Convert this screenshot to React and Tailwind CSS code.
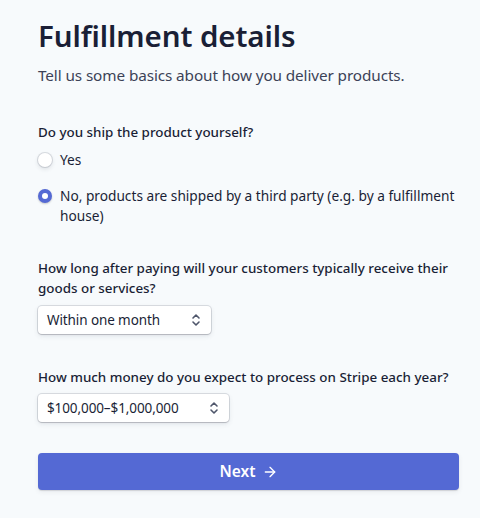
import { ArrowRight } from 'lucide-react';

const font = { fontFamily: '"Noto Sans", "Open Sans", sans-serif' };

const Chevrons = () => (
  <svg width="10" height="14" viewBox="0 0 10 14" fill="none" stroke="#4f566b" strokeWidth="1.6" strokeLinecap="round" strokeLinejoin="round">
    <path d="M2 5 L5 2 L8 5" />
    <path d="M2 9 L5 12 L8 9" />
  </svg>
);

const Select = ({ value, width }) => (
  <div
    className={`${width} h-[28px] flex items-center justify-between pl-[9px] pr-[10px] bg-white rounded-[4px] text-[13.5px] tracking-[-0.1px] text-[#1a1f36] shadow-[0_0_0_1px_rgba(60,66,87,0.16),0_2px_5px_0_rgba(60,66,87,0.12),0_1px_1px_0_rgba(0,0,0,0.12)]`}
  >
    <span>{value}</span>
    <Chevrons />
  </div>
);

const Radio = ({ checked, children }) => (
  <div className="flex items-start gap-[8px]">
    <div className="h-[20px] flex items-center shrink-0">
      {checked ? (
        <div className="w-[14px] h-[14px] rounded-full bg-[#5469d4] flex items-center justify-center shadow-[0_1px_2px_rgba(0,0,0,0.2)]">
          <div className="w-[6px] h-[6px] rounded-full bg-white" />
        </div>
      ) : (
        <div className="w-[14px] h-[14px] rounded-full bg-white shadow-[0_0_0_1px_rgba(60,66,87,0.16),0_2px_4px_0_rgba(60,66,87,0.16)]" />
      )}
    </div>
    <span className="text-[13.7px] leading-[20px] text-[#1a1f36]">{children}</span>
  </div>
);

const Question = ({ className, children }) => (
  <p className={`${className} text-[13.4px] leading-[20px] font-medium text-[#1a1f36]`}>{children}</p>
);

export default function App() {
  return (
    <div className="min-h-[518px] bg-[#f7fafc] pl-[38px] pt-[16px]" style={font}>
      <div className="w-[421px]">
        <h1 className="text-[29.5px] tracking-[-0.1px] leading-[40px] font-semibold text-[#1a1f36]">Fulfillment details</h1>
        <p className="mt-[7px] text-[15.3px] tracking-[-0.1px] leading-[24px] text-[#3c4257]">
          Tell us some basics about how you deliver products.
        </p>

        <Question className="mt-[35px]">Do you ship the product yourself?</Question>
        <div className="mt-[8px] flex flex-col gap-[16px]">
          <Radio>Yes</Radio>
          <Radio checked>No, products are shipped by a third party (e.g. by a fulfillment house)</Radio>
        </div>

        <Question className="mt-[32px]">
          How long after paying will your customers typically receive their goods or services?
        </Question>
        <div className="mt-[8px]">
          <Select value="Within one month" width="w-[173px]" />
        </div>

        <Question className="mt-[33px]">
          How much money do you expect to process on Stripe each year?
        </Question>
        <div className="mt-[7px]">
          <Select value="$100,000–$1,000,000" width="w-[191px]" />
        </div>

        <button className="mt-[31px] w-full h-[37px] rounded-[4px] bg-[#5469d4] text-white text-[15.5px] font-semibold flex items-center justify-center gap-[6px] shadow-[0_1px_1px_rgba(0,0,0,0.12),0_2px_5px_rgba(60,66,87,0.08)]">
          Next
          <ArrowRight size={16} strokeWidth={2} />
        </button>
      </div>
    </div>
  );
}
